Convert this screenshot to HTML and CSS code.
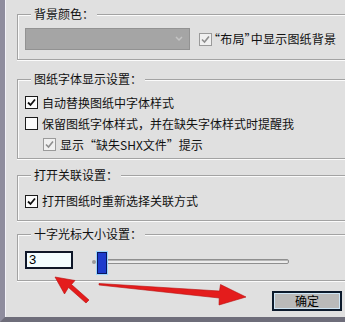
FILE: index.html
```html
<!DOCTYPE html>
<html lang="zh-CN">
<head>
<meta charset="utf-8">
<title>选项</title>
<link rel="stylesheet" href="styles.css">
</head>
<body>
<div class="dialog">
  <fieldset class="group g1">
    <legend>背景颜色：</legend>
    <div class="row">
      <div class="combo">
        <svg class="combo-arrow" width="8" height="6" viewBox="0 0 8 6"><path d="M1 1 L4 4 L7 1" fill="none" stroke="#c4c4c4" stroke-width="1.5"/></svg>
      </div>
      <label class="check">
        <span class="cb disabled"><svg width="11" height="11" viewBox="0 0 11 11"><path d="M2 5.5 L4.5 8 L9 2.5" fill="none" stroke="#8e8e8e" stroke-width="1.6"/></svg></span>
        <span class="lbl narrow">“布局”中显示图纸背景</span>
      </label>
    </div>
  </fieldset>

  <fieldset class="group g2">
    <legend>图纸字体显示设置：</legend>
    <label class="check line">
      <span class="cb"><svg width="11" height="11" viewBox="0 0 11 11"><path d="M2 5.5 L4.5 8 L9 2.5" fill="none" stroke="#111" stroke-width="1.8"/></svg></span>
      <span class="lbl">自动替换图纸中字体样式</span>
    </label>
    <label class="check line">
      <span class="cb"></span>
      <span class="lbl">保留图纸字体样式，并在缺失字体样式时提醒我</span>
    </label>
    <label class="check line indent">
      <span class="cb disabled"><svg width="11" height="11" viewBox="0 0 11 11"><path d="M2 5.5 L4.5 8 L9 2.5" fill="none" stroke="#8e8e8e" stroke-width="1.6"/></svg></span>
      <span class="lbl">显示“缺失SHX文件”提示</span>
    </label>
  </fieldset>

  <fieldset class="group g3">
    <legend>打开关联设置：</legend>
    <label class="check line">
      <span class="cb"><svg width="11" height="11" viewBox="0 0 11 11"><path d="M2 5.5 L4.5 8 L9 2.5" fill="none" stroke="#111" stroke-width="1.8"/></svg></span>
      <span class="lbl">打开图纸时重新选择关联方式</span>
    </label>
  </fieldset>

  <fieldset class="group g4">
    <legend>十字光标大小设置：</legend>
    <div class="row cursor-row">
      <div class="num">3</div>
      <div class="slider">
        <span class="dot"></span>
        <div class="track"></div>
        <span class="thumb"></span>
      </div>
    </div>
  </fieldset>

  <div class="buttons">
    <button class="btn">确定</button>
  </div>

  <svg class="arrows" width="345" height="322" viewBox="0 0 345 322">
    <polygon points="55,277 75,280.5 71.5,284.5 89,300 86,303 68.5,287.5 64.5,294" fill="#e41c1c" stroke="#b80e0e" stroke-width="0.6"/>
    <polygon points="99,283.5 219.5,291 220.5,284.5 246,297 219,305 219.2,298 99,285" fill="#e41c1c" stroke="#b80e0e" stroke-width="0.6"/>
  </svg>
</div>
</body>
</html>
```

FILE: styles.css
```css
html, body {
  margin: 0;
  padding: 0;
  overflow: hidden;
}

body {
  width: 345px;
  height: 322px;
  font-family: "Noto Sans CJK SC", "Noto Sans", sans-serif;
  font-size: 12px;
  line-height: 14px;
  color: #111;
}

.dialog {
  position: relative;
  box-sizing: border-box;
  width: 345px;
  height: 322px;
  background: #e0e0e0;
  border-left: 5px solid #8f8d9e;
  border-bottom: 5px solid #6e6d7a;
  box-shadow: inset 1px 0 0 #f3f2f8;
  overflow: hidden;
}

.group {
  margin: 0 -20px 0 12px;
  border: 1px solid #a3a3a3;
  box-shadow: inset 1px 1px 0 #fbfbfb, 0 1px 0 #fbfbfb;
  padding: 0 0 0 7px;
  min-width: 0;
}

.group legend {
  margin-left: 6px;
  padding: 0 3px;
  line-height: 14px;
  height: 14px;
  background: #e0e0e0;
}

.g1 { margin-top: 7px; padding-top: 7px; padding-bottom: 9px; }
.g2 { margin-top: 12px; padding-top: 6px; padding-bottom: 3px; }
.g3 { margin-top: 9px; padding-top: 8px; padding-bottom: 8px; }
.g4 { margin-top: 6px; padding-top: 10px; padding-bottom: 6px; }

.row {
  display: flex;
  align-items: center;
}

.combo {
  position: relative;
  box-sizing: border-box;
  width: 165px;
  height: 22px;
  background: #a5a5a5;
  border: 1px solid #929292;
  display: flex;
  align-items: center;
  justify-content: flex-end;
  padding-right: 6px;
  margin-right: 9px;
  flex: none;
}

.check {
  display: flex;
  align-items: center;
  gap: 4px;
  white-space: nowrap;
}

.g1 .check {
  gap: 2px;
}

.narrow {
  font-feature-settings: "halt" 1;
  letter-spacing: 0.2px;
}

.line {
  height: 21px;
}

.indent {
  padding-left: 18px;
}

.cb {
  box-sizing: border-box;
  width: 13px;
  height: 13px;
  border: 1px solid #1c1c1c;
  background: #fbfbfb;
  display: flex;
  align-items: center;
  justify-content: center;
  flex: none;
}

.cb.disabled {
  border-color: #9a9a9a;
  background: #f0f0f0;
}

.g3 .line { height: 22px; }

.cursor-row {
  height: 23px;
  align-items: flex-start;
}

.num {
  box-sizing: border-box;
  width: 48px;
  height: 18px;
  border: 2px solid #0e1628;
  background: #f2fcff;
  padding-left: 2px;
  line-height: 14px;
  font-family: "Liberation Sans", Arial, sans-serif;
  font-size: 13px;
  color: #000;
}

.slider {
  position: relative;
  margin-left: 19px;
  width: 197px;
  height: 23px;
  display: flex;
  align-items: center;
}

.dot {
  width: 4px;
  height: 4px;
  border-radius: 50%;
  background: #9a9a9a;
  margin-top: -2px;
}

.track {
  box-sizing: border-box;
  flex: 1;
  height: 5px;
  margin-left: 2px;
  margin-top: -2px;
  border: 1px solid #8f8f8f;
  border-radius: 2px;
  background: #ececec;
  box-shadow: inset 0 1px 0 #b5b5b5;
}

.thumb {
  position: absolute;
  left: 5px;
  top: 1px;
  box-sizing: border-box;
  width: 10px;
  height: 22px;
  background: #1d3ccd;
  border: 1px solid #0b175e;
  box-shadow: 0 0 0 1px #9bd6ff;
}

.buttons {
  display: flex;
  justify-content: flex-end;
  margin-top: 10px;
  padding-right: 3px;
}

.btn {
  box-sizing: border-box;
  width: 70px;
  height: 20px;
  padding: 0;
  border: 2px solid #0c1a2c;
  background: #bababa;
  box-shadow: inset 0 0 0 1px #cfe6f6;
  font-family: "Noto Sans CJK SC", "Noto Sans", sans-serif;
  font-size: 12px;
  line-height: 14px;
  color: #000;
}

.arrows {
  position: absolute;
  left: -5px;
  top: 0;
  pointer-events: none;
}
```
